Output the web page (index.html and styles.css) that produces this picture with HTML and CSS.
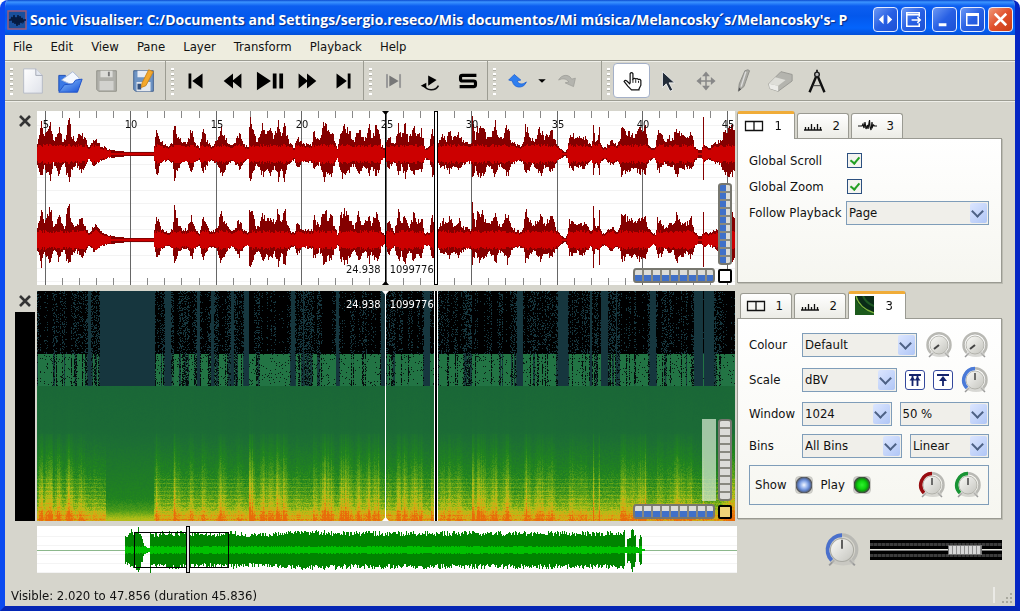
FILE: index.html
```
<!DOCTYPE html>
<html lang="en">
<head>
<meta charset="UTF-8">
<meta name="viewport" content="width=device-width, initial-scale=1.0">
<title>Sonic Visualiser</title>
<link rel="stylesheet" href="styles.css">
</head>
<body>
  <!-- Shared icon shapes -->
  <svg class="defs" aria-hidden="true">
    <defs>
      <linearGradient id="knob" x1="0" y1="0" x2="1" y2="1">
        <stop offset="0" stop-color="#fbfbf8"/>
        <stop offset="1" stop-color="#c4c4be"/>
      </linearGradient>
      <linearGradient id="folder" x1="0" y1="0" x2="1" y2="1">
        <stop offset="0" stop-color="#8fc4fb"/>
        <stop offset="1" stop-color="#1450d8"/>
      </linearGradient>
      <linearGradient id="paper" x1="0" y1="0" x2="1" y2="1">
        <stop offset="0" stop-color="#ffffff"/>
        <stop offset="1" stop-color="#dfe2ea"/>
      </linearGradient>
      <symbol id="i-cross" viewBox="0 0 14 14"><path d="M2 2l10 10M12 2L2 12" stroke="#333" stroke-width="2.600"/></symbol>
      <symbol id="i-panes" viewBox="0 0 20 14"><path d="M1.500 2.500h17v9h-17zM10 2.500v9" fill="none" stroke="#111" stroke-width="1.300"/></symbol>
      <symbol id="i-ruler" viewBox="0 0 20 14"><path d="M1 11h18M2.500 11V8M5.500 11V8M8.500 11V5M11.500 11V8M14.500 11V5M17.500 11V8" fill="none" stroke="#111" stroke-width="1.300"/></symbol>
      <symbol id="i-wave" viewBox="0 0 20 14"><path d="M1 7h4l1-2 1 4 1-6 1 7 1.500-4 .5 4 1.500-9 .5 7 1 3 1-8 .5 5 1-2 1 1h3" fill="none" stroke="#111" stroke-width="1.200"/></symbol>
      <symbol id="i-dial" viewBox="0 0 28 28">
        <path d="M4 26l4-4M24 26l-4-4" stroke="#999" stroke-width="1.500"/>
        <path d="M6 22a11.500 11.500 0 1 1 16 0" fill="none" stroke="#b9b9b4" stroke-width="2.500"/>
        <ellipse cx="15" cy="23" rx="9" ry="3" fill="#c0c0ba" opacity=".6"/>
        <circle cx="14" cy="14" r="9" fill="url(#knob)" stroke="#a9a9a2" stroke-width=".8"/>
      </symbol>
    </defs>
  </svg>

  <div class="window">
    <header class="titlebar">
      <svg class="app-icon" viewBox="0 0 20 20"><path d="M1 1h18v18H1z" fill="#1a4f9c" stroke="#9c5c78" stroke-width="1.500"/><path d="M2 10h2l1-3 1 6 1-8 1 9 1-7 1 9 1-11 1 10 1-9 1 7 1-5 1 4 1-2h2" fill="none" stroke="#061a40" stroke-width="1.500"/></svg>
      <h1>Sonic Visualiser: C:/Documents and Settings/sergio.reseco/Mis documentos/Mi música/Melancosky´s/Melancosky's- P</h1>
      <div class="window-buttons">
        <button aria-label="Switch screen"><svg viewBox="0 0 24 24"><path d="M10 7v10l-5-5zM14 7v10l5-5z" fill="#fff"/></svg></button>
        <button class="apart" aria-label="Move to screen"><svg viewBox="0 0 24 24"><path d="M18 9V5H5v14h13v-3M5 7h13M10 12.500h9M16 9.500l3 3-3 3" fill="none" stroke="#fff" stroke-width="1.600"/></svg></button>
        <button aria-label="Minimize"><svg viewBox="0 0 24 24"><path d="M6 16h8v3H6z" fill="#fff"/></svg></button>
        <button aria-label="Maximize"><svg viewBox="0 0 24 24"><path d="M6 6h12v12H6zM6 7.500h12" fill="none" stroke="#fff" stroke-width="1.600"/></svg></button>
        <button class="close" aria-label="Close"><svg viewBox="0 0 24 24"><path d="M6 6l12 12M18 6L6 18" stroke="#fff" stroke-width="2.600"/></svg></button>
      </div>
    </header>

    <nav class="menubar">
      <a href="#">File</a>
      <a href="#">Edit</a>
      <a href="#">View</a>
      <a href="#">Pane</a>
      <a href="#">Layer</a>
      <a href="#">Transform</a>
      <a href="#">Playback</a>
      <a href="#">Help</a>
    </nav>

    <div class="toolbar">
      <div class="group files">
        <button aria-label="New"><svg viewBox="0 0 30 30"><path d="M5 2h13l7 7v19H5z" fill="url(#paper)" stroke="#b4b8c4"/><path d="M18 2v7h7" fill="#e4e8f0" stroke="#a4a8b4"/></svg></button>
        <button aria-label="Open"><svg viewBox="0 0 30 30"><path d="M3 26V9h7l2 3h12v6" fill="#3a78e4" stroke="#1c4cb4"/><path d="M6 14l12-9 7 7-6 8z" fill="#f4f8ff" stroke="#a8b8d8"/><path d="M3 27l6-8 9-1 3-4 7-1-5 14z" fill="url(#folder)" stroke="#1c50c8"/></svg></button>
        <button aria-label="Save"><svg viewBox="0 0 30 30"><path d="M4 4h21v22H6l-2-2z" fill="#b0b0aa" stroke="#909088"/><path d="M8 4h13v7H8z" fill="#dcdcd8"/><path d="M16 5h2v5h-2z" fill="#777"/><path d="M7 15h15v10H7z" fill="#d2d2ce"/></svg></button>
        <button aria-label="Save As"><svg viewBox="0 0 30 30"><path d="M4 4h21v22H6l-2-2z" fill="#6e94c4" stroke="#3c5c8c"/><path d="M8 4h13v7H8z" fill="#e8ecf4"/><path d="M7 16h15v10H7z" fill="#e4e8ee"/><path d="M8 18h4v6H8z" fill="#35517c"/><path d="M20 3l5 2-8 15-5 2 1-5z" fill="#f4a82c" stroke="#c88420"/></svg></button>
      </div>
      <div class="group">
        <button aria-label="Rewind to start"><svg viewBox="0 0 30 30"><path d="M7 7h3v16H7zM22 7v16L11 15z"/></svg></button>
        <button aria-label="Rewind"><svg viewBox="0 0 30 30"><path d="M15 7v16L5 15zM24 7v16l-10-8z"/></svg></button>
        <button aria-label="Play / Pause"><svg viewBox="0 0 30 30"><path d="M1 5v20l15-10zM18 7h4v16h-4zM25 7h4v16h-4z"/></svg></button>
        <button aria-label="Fast forward"><svg viewBox="0 0 30 30"><path d="M6 7v16l10-8zM15 7v16l10-8z"/></svg></button>
        <button aria-label="Forward to end"><svg viewBox="0 0 30 30"><path d="M7 7v16l11-8zM19 7h3v16h-3z"/></svg></button>
      </div>
      <div class="group">
        <button disabled aria-label="Constrain to selection"><svg viewBox="0 0 30 30"><path d="M7 8h1v14H7zM21 8h1v14h-1z" fill="#777" stroke="#999"/><path d="M10 9v12l10-6z" fill="#777"/></svg></button>
        <button aria-label="Loop"><svg viewBox="0 0 30 30"><path d="M12 9v11l9-6z"/><path d="M7 19c3 7 13 7 16 1" fill="none" stroke="#111" stroke-width="1.600"/><path d="M4 20l6-3v6z"/></svg></button>
        <button aria-label="Solo"><svg viewBox="0 0 30 30"><path d="M24 9H9q-2 0-2 2v2q0 2 2 2h12q2 0 2 2v2q0 2-2 2H6" fill="none" stroke="#000" stroke-width="3.400"/></svg></button>
      </div>
      <div class="group history">
        <button aria-label="Undo"><svg viewBox="0 0 30 30"><path d="M5 14l6-6 7 6-4 1c2 4 6 4 10 1-3 8-14 7-15-1z" fill="#2f7ff0" stroke="#1c5ed0" stroke-width=".8"/></svg></button>
        <button class="drop" aria-label="Undo list"><svg viewBox="0 0 12 30"><path d="M2 13h8l-4 4z"/></svg></button>
        <button disabled aria-label="Redo"><svg viewBox="0 0 30 30"><path d="M6 14c3-6 11-7 14-1l4-1-2 9-9-4 4-1c-3-4-7-4-11-2z" fill="#b4b4ae" stroke="#9c9c96" stroke-width=".8"/></svg></button>
        <button class="drop" disabled aria-label="Redo list"></button>
      </div>
      <div class="group last">
        <button class="pressed" aria-label="Navigate"><svg viewBox="0 0 30 30"><path d="M13 17V7q1.500-2 3 0v6q1.500-1.500 3 0 1.500-1.200 3 .5 1.500-1 2.500 1v5l-2 4v1h-8l-4-4-4-5q1-2 3-.5l3 3z" fill="#fff" stroke="#111" stroke-width="1.300"/><path d="M16 13v4M19 14v3M22 15v2" stroke="#111"/></svg></button>
        <button aria-label="Select"><svg viewBox="0 0 30 30"><path d="M8 5v17l4-4 4 8 3-1.500-4-7.500h6z" fill="#222c38" stroke="#fff" stroke-width=".8"/></svg></button>
        <button disabled aria-label="Edit"><svg viewBox="0 0 30 30"><path d="M15 6v18M6 15h18M12.500 9L15 6l2.500 3zM12.500 21l2.500 3 2.500-3zM9 12.500L6 15l3 2.500zM21 12.500l3 2.500-3 2.500z" fill="#8c8c88" stroke="#888" stroke-width="1.600"/></svg></button>
        <button disabled aria-label="Draw"><svg viewBox="0 0 30 30"><path d="M17 4q4-2 5 0l-6 17-6 5 1-8z" fill="#aaaaa4" stroke="#8c8c88"/><path d="M18 5l-5 16" stroke="#ddd" stroke-width="1.500"/><path d="M10 26l1-4 2 2z" fill="#555"/></svg></button>
        <button disabled aria-label="Erase"><svg viewBox="0 0 30 30"><path d="M3 18L16 5l12 3v7L13 26l-9-3z" fill="#b4b4ae" stroke="#989892"/><path d="M3 18l10 2v6l-9-3z" fill="#ecece8"/><path d="M3 18l7-7 11 3-8 6z" fill="#deded8"/></svg></button>
        <button aria-label="Measure"><svg viewBox="0 0 30 30"><path d="M15 8L7 27M15 8l8 19" stroke="#111" stroke-width="2.600"/><path d="M10 20h9" stroke="#333"/><circle cx="15" cy="8" r="2.500" fill="#bbb" stroke="#222" stroke-width="1.500"/><path d="M15 3v3" stroke="#222" stroke-width="2"/></svg></button>
      </div>
    </div>

    <main class="workspace">
      <!-- Waveform pane -->
      <div class="gutter">
        <button class="pane-close" aria-label="Close pane"><svg viewBox="0 0 14 14"><use href="#i-cross"/></svg></button>
      </div>
      <section class="pane" id="wave-pane">
        <canvas id="waveform"></canvas>
        <div class="ruler" id="ruler"></div>
        <div class="readout bottom"><span>24.938</span><span>1099776</span></div>
        <div class="wheel vertical blue"></div>
        <div class="wheel horizontal"></div>
        <button class="reset" aria-label="Reset zoom"></button>
      </section>
      <section class="properties">
        <div class="tabs" role="tablist">
          <button role="tab" aria-selected="true"><svg viewBox="0 0 20 14"><use href="#i-panes"/></svg>1</button>
          <button role="tab"><svg viewBox="0 0 20 14"><use href="#i-ruler"/></svg>2</button>
          <button role="tab"><svg viewBox="0 0 20 14"><use href="#i-wave"/></svg>3</button>
        </div>
        <div class="sheet general">
          <label for="gscroll">Global Scroll</label>
          <input type="checkbox" id="gscroll" checked>
          <label for="gzoom">Global Zoom</label>
          <input type="checkbox" id="gzoom" checked>
          <label for="follow">Follow Playback</label>
          <div class="combo"><select id="follow"><option>Page</option></select></div>
        </div>
      </section>

      <!-- Spectrogram pane -->
      <div class="gutter">
        <button class="pane-close" aria-label="Close pane"><svg viewBox="0 0 14 14"><use href="#i-cross"/></svg></button>
        <div class="key"></div>
      </div>
      <section class="pane" id="spectrum-pane">
        <canvas id="spectrum"></canvas>
        <div class="readout top"><span>24.938</span><span>1099776</span></div>
        <div class="zoom-strip"></div>
        <div class="wheel vertical"></div>
        <div class="wheel horizontal"></div>
        <button class="reset yellow" aria-label="Reset zoom"></button>
      </section>
      <section class="properties">
        <div class="tabs" role="tablist">
          <button role="tab"><svg viewBox="0 0 20 14"><use href="#i-panes"/></svg>1</button>
          <button role="tab"><svg viewBox="0 0 20 14"><use href="#i-ruler"/></svg>2</button>
          <button role="tab" aria-selected="true"><svg class="thumb" viewBox="0 0 19 19"><path d="M0 0h19v19H0z" fill="#0a2c18"/><path d="M0 2q5 12 19 15v2H0z" fill="#1c5a1c"/><path d="M1 0q3 12 18 17" fill="none" stroke="#7cb43c" stroke-width="1.300"/><path d="M8 0q3 7 11 10" fill="none" stroke="#1f5a24" stroke-width="2"/></svg>3</button>
        </div>
        <div class="sheet layer">
          <div class="row tall">
            <label for="colour">Colour</label>
            <div class="combo"><select id="colour"><option>Default</option></select></div>
            <div class="dial"><svg viewBox="0 0 28 28"><use href="#i-dial"/><path d="M14 14l-5 4" stroke="#444" stroke-width="2"/></svg><input type="range" aria-label="Threshold" value="0"></div>
            <div class="dial"><svg viewBox="0 0 28 28"><use href="#i-dial"/><path d="M14 14l-5 4" stroke="#444" stroke-width="2"/></svg><input type="range" aria-label="Colour rotation" value="0"></div>
          </div>
          <div class="row tall">
            <label for="scale">Scale</label>
            <div class="combo"><select id="scale"><option>dBV</option></select></div>
            <button class="toggle" aria-label="Normalize columns"><svg viewBox="0 0 18 18"><path d="M3 4h12M6.500 15V5M11.500 15V5" fill="none" stroke="#14246c" stroke-width="1.800"/><path d="M3.500 9.500l3-4 3 4zM8.500 9.500l3-4 3 4z" fill="#14246c"/></svg></button>
            <button class="toggle" aria-label="Normalize visible area"><svg viewBox="0 0 18 18"><path d="M3 4h12M9 15V7" fill="none" stroke="#14246c" stroke-width="1.800"/><path d="M5 10l4-5 4 5z" fill="#14246c"/></svg></button>
            <div class="dial"><svg viewBox="0 0 28 28"><use href="#i-dial"/><path d="M6 22A11.500 11.500 0 0 1 14 2.500" fill="none" stroke="#4a7ad8" stroke-width="3.500"/><path d="M14 14V7" stroke="#444" stroke-width="1.500"/></svg><input type="range" aria-label="Gain"></div>
          </div>
          <div class="row">
            <label for="win">Window</label>
            <div class="combo"><select id="win"><option>1024</option></select></div>
            <div class="combo"><select aria-label="Window overlap"><option>50 %</option></select></div>
          </div>
          <div class="row">
            <label for="bins">Bins</label>
            <div class="combo bins"><select id="bins"><option>All Bins</option></select></div>
            <div class="combo"><select aria-label="Frequency scale"><option>Linear</option></select></div>
          </div>
          <div class="playbox">
            <label for="show">Show</label>
            <input type="checkbox" class="led" id="show" checked>
            <label for="play">Play</label>
            <input type="checkbox" class="led green" id="play" checked>
            <div class="dial push"><svg viewBox="0 0 28 28"><use href="#i-dial"/><path d="M6 22A11.500 11.500 0 0 1 14 2.500" fill="none" stroke="#980c10" stroke-width="3.500"/><path d="M14 14V7" stroke="#444" stroke-width="1.500"/></svg><input type="range" aria-label="Playback gain"></div>
            <div class="dial"><svg viewBox="0 0 28 28"><use href="#i-dial"/><path d="M6 22A11.500 11.500 0 0 1 14 2.500" fill="none" stroke="#189434" stroke-width="3.500"/><path d="M14 14V7" stroke="#444" stroke-width="1.500"/></svg><input type="range" aria-label="Playback pan"></div>
          </div>
        </div>
      </section>
    </main>

    <div class="lower">
      <canvas id="overview"></canvas>
      <div class="output">
        <div class="dial big"><svg viewBox="0 0 28 28"><use href="#i-dial"/><path d="M6 22A11.500 11.500 0 0 1 14 2.500" fill="none" stroke="#4a70cc" stroke-width="3"/><path d="M14 13V6" stroke="#444" stroke-width="1.300"/></svg><input type="range" aria-label="Playback speed"></div>
        <input type="range" class="fader" aria-label="Volume" min="0" max="100" value="80">
      </div>
    </div>

    <footer class="statusbar">
      <p>Visible: 2.020 to 47.856 (duration 45.836)</p>
      <svg class="sizegrip" viewBox="0 0 22 18"><path d="M1 0v16" stroke="#fff"/><path d="M17 7h2M13 11h2M17 11h2M9 15h2M13 15h2M17 15h2" stroke="#a8a89e" stroke-width="2"/></svg>
    </footer>
  </div>

  <script src="script.js"></script>
</body>
</html>
```
FILE: styles.css
```
* {
  box-sizing: border-box;
}

body {
  margin: 0;
  background: #fff;
  font-family: "DejaVu Sans Condensed", "DejaVu Sans", sans-serif;
  font-size: 13px;
  line-height: 16px;
  color: #111;
}

button {
  font: inherit;
  color: inherit;
  padding: 0;
  border: 0;
  background: none;
}

svg {
  display: block;
}

.defs {
  position: absolute;
  width: 0;
  height: 0;
}

.window {
  display: flex;
  flex-direction: column;
  min-height: 100vh;
  border: 5px solid #0a3ae0;
  border-color: #0a3ae0 #0526c4 #0526b4 #0a4af0;
  border-top: 0;
  border-radius: 8px 8px 0 0;
  background: #d6d5cc;
  overflow: hidden;
}

/* Title bar */
.titlebar {
  display: flex;
  align-items: center;
  height: 35px;
  margin: 0 -5px;
  padding: 4px 7px 0;
  background: linear-gradient(#0a4ad0 0, #3c94ff 2px, #0c5ef0 6px, #0458ec 16px, #0464fc 28px, #0450d8 35px);
}

.app-icon {
  width: 20px;
  height: 20px;
  margin-right: 3px;
}

.titlebar h1 {
  flex: 1;
  min-width: 0;
  margin: 0;
  overflow: hidden;
  white-space: nowrap;
  font: bold 14px/20px "Open Sans", sans-serif;
  color: #fff;
  text-shadow: 1px 1px 1px #0a2a80;
}

.window-buttons {
  display: flex;
  gap: 3px;
}

.window-buttons button {
  width: 25px;
  height: 25px;
  border: 1px solid #e4ecff;
  border-radius: 4px;
  background: linear-gradient(135deg, #6c98f4, #2860e4 50%, #1c50d4);
}

.window-buttons .apart {
  margin-right: 3px;
}

.window-buttons .close {
  background: linear-gradient(135deg, #f09878, #e0502c 50%, #c83c14);
}

/* Menu */
.menubar {
  display: flex;
  gap: 18px;
  height: 25px;
  padding: 4px 8px;
  background: #eeeddf;
}

.menubar a {
  color: #111;
  text-decoration: none;
}

/* Toolbar */
.toolbar {
  display: flex;
  height: 41px;
  border-top: 1px solid #9c9c92;
  border-bottom: 1px solid #9c9c92;
  box-shadow: inset 0 1px #f0f0ea, 0 1px #eeeee8;
}

.group {
  position: relative;
  display: flex;
  align-items: center;
  padding: 0 1px 0 11px;
  border-right: 1px solid #9c9c92;
}

.group.files {
  padding: 0 3px 0 9px;
}

.group.history {
  padding-right: 4px;
}

.group.last {
  border-right: 0;
}

.group::before {
  content: "";
  position: absolute;
  left: 5px;
  top: 7px;
  bottom: 5px;
  width: 3px;
  background: repeating-linear-gradient(#fff 0, #fff 2px, #b0b0a6 2px, #b0b0a6 3px, transparent 3px, transparent 5px);
}

.group button {
  width: 37px;
  height: 35px;
}

.group svg {
  width: 28px;
  height: 28px;
  margin: 0 auto;
}

.group .drop,
.group .drop svg {
  width: 12px;
}

.group .pressed {
  border: 1px solid #a4b0c8;
  border-radius: 4px;
  background: #fff;
}

/* Panes */
.workspace {
  flex: 1;
  display: grid;
  grid-template-columns: 20px minmax(0, 1fr) 265px;
  grid-template-rows: minmax(174px, 87fr) minmax(230px, 115fr);
  column-gap: 2px;
  row-gap: 6px;
  padding: 10px 13px 0 10px;
}

.gutter {
  display: flex;
  flex-direction: column;
  align-items: center;
}

.pane-close svg {
  width: 14px;
  height: 14px;
  margin: 3px 0 4px;
}

.key {
  flex: 1;
  width: 20px;
  background: #000;
}

.pane {
  position: relative;
  background: #fff;
}

.pane canvas {
  position: absolute;
  width: 100%;
  height: 100%;
}

.ruler span {
  position: absolute;
  top: 7px;
  transform: translateX(-50%);
  font-size: 11px;
  line-height: 14px;
}

.readout {
  position: absolute;
  left: 50%;
  display: flex;
  gap: 9px;
  margin-left: -40px;
  font-size: 11px;
  line-height: 14px;
}

.readout.bottom {
  bottom: 8px;
}

.readout.top {
  top: 7px;
  color: #fff;
}

.wheel {
  position: absolute;
  border: 2px solid #77776f;
  background-color: #dcdcd8;
}

.wheel.vertical {
  right: 3px;
  bottom: 20px;
  width: 14px;
  height: 82px;
  border-radius: 4px / 3px;
  background-image: repeating-linear-gradient(transparent 0, transparent 6px, #88887f 6px, #88887f 8px);
}

.wheel.vertical.blue {
  background-image: repeating-linear-gradient(transparent 0, transparent 6px, #88887f 6px, #88887f 8px), linear-gradient(90deg, #4070c8 6px, transparent 6px);
}

.wheel.horizontal {
  right: 20px;
  bottom: 2px;
  width: 82px;
  height: 15px;
  border-radius: 3px / 4px;
  background-image: repeating-linear-gradient(90deg, transparent 0, transparent 7px, #88887f 7px, #88887f 9px), linear-gradient(transparent 5px, #4070c8 5px);
}

.reset {
  position: absolute;
  right: 3px;
  bottom: 2px;
  width: 14px;
  height: 14px;
  border: 2px solid #000;
  border-radius: 2px;
  background: #fff;
}

.reset.yellow {
  background: #f0d478;
}

.zoom-strip {
  position: absolute;
  right: 19px;
  bottom: 20px;
  width: 14px;
  height: 82px;
  background: rgba(220, 236, 214, 0.7);
}

/* Property boxes */
.properties {
  display: flex;
  flex-direction: column;
  padding-bottom: 2px;
}

.tabs {
  display: flex;
  align-items: flex-end;
  gap: 2px;
  height: 27px;
  flex: none;
}

.tabs button {
  display: flex;
  align-items: center;
  justify-content: space-between;
  width: 52px;
  height: 25px;
  padding: 0 8px 0 5px;
  border: 1px solid #9a9a92;
  border-bottom: 0;
  border-radius: 3px 3px 0 0;
  background: linear-gradient(#fff, #ecece6);
}

.tabs button:first-child:not([aria-selected]) {
  margin-left: 3px;
}

.tabs button[aria-selected] {
  z-index: 1;
  width: 58px;
  height: 28px;
  margin-bottom: -1px;
  padding: 0 12px 2px 6px;
  border-top: 3px solid #f0ac38;
  background: #fff;
}

.tabs svg {
  width: 20px;
  height: 14px;
}

.tabs .thumb {
  width: 19px;
  height: 19px;
}

.sheet {
  flex: 1;
  border: 1px solid #9a9a92;
  box-shadow: 1px 1px #bcbcb2;
  background: linear-gradient(#fff, #f6f6f0);
  padding: 10px 12px 12px 11px;
}

.general {
  display: grid;
  grid-template-columns: 97px 1fr;
  grid-auto-rows: 23px;
  align-content: start;
  align-items: center;
  row-gap: 3px;
  white-space: nowrap;
}

.sheet input[type="checkbox"] {
  appearance: none;
  width: 15px;
  height: 15px;
  margin: 0 1px;
  border: 1px solid #2c5080;
  background: #f4f4f0;
}

.sheet input[type="checkbox"]:not(.led):checked::after {
  content: "";
  display: block;
  width: 4px;
  height: 7px;
  margin: 1px 0 0 4px;
  border: solid #24a024;
  border-width: 0 2px 2px 0;
  transform: rotate(40deg);
}

.combo {
  position: relative;
  flex: 1;
  min-width: 0;
}

.combo.bins {
  flex: 0 0 100px;
}

.combo select {
  display: block;
  appearance: none;
  width: 100%;
  height: 24px;
  padding: 0 20px 0 2px;
  border: 1px solid #7f9db9;
  border-radius: 0;
  background: #f0efea;
  font: inherit;
  color: inherit;
}

.combo::before {
  content: "";
  position: absolute;
  right: 2px;
  top: 2px;
  width: 17px;
  height: 20px;
  border-radius: 2px;
  background: linear-gradient(135deg, #dce6ff, #b0c6f6);
  pointer-events: none;
}

.combo::after {
  content: "";
  position: absolute;
  right: 7px;
  top: 6px;
  width: 7px;
  height: 7px;
  border: solid #4d6185;
  border-width: 0 2px 2px 0;
  transform: rotate(45deg);
  pointer-events: none;
}

.layer {
  display: flex;
  flex-direction: column;
  gap: 3px;
}

.row {
  display: flex;
  align-items: center;
  gap: 8px;
  height: 29px;
}

.row.tall {
  height: 32px;
}

.row label {
  width: 45px;
}

.toggle {
  width: 20px;
  height: 20px;
  border: 1px solid #34489c;
  border-radius: 3px;
  background: #fff;
}

.dial {
  position: relative;
  flex: none;
  width: 28px;
  height: 28px;
}

.dial svg {
  width: 100%;
  height: 100%;
}

.dial input {
  position: absolute;
  inset: 0;
  width: 100%;
  margin: 0;
  opacity: 0;
}

.dial.big {
  width: 36px;
  height: 36px;
}

.dial.push {
  margin-left: auto;
}

.playbox {
  display: flex;
  align-items: center;
  gap: 8px;
  height: 40px;
  margin-top: 2px;
  padding: 0 6px 0 5px;
  border: 1px solid #7f9db9;
}

.sheet .playbox .led {
  width: 18px;
  height: 18px;
  margin: 0;
  border: 1px solid #c8c8c2;
  border-radius: 4px;
  background: radial-gradient(circle, #f4f8ff 0, #88a8e8 4px, #5c7cc0 6px, #555 8px, #d0d0cc 9px);
}

.sheet .playbox .led.green {
  background: radial-gradient(circle, #30f030 0, #10d410 4px, #0ca00c 6px, #444 8px, #d0d0cc 9px);
}

/* Overview and output level */
.lower {
  display: flex;
  margin-top: 5px;
  padding: 0 13px 0 32px;
}

#overview {
  flex: 1;
  min-width: 0;
  height: 47px;
  background: #fff;
}

.output {
  flex: 0 0 265px;
  display: flex;
  align-items: center;
  justify-content: flex-end;
  gap: 10px;
}

.fader {
  appearance: none;
  width: 132px;
  height: 20px;
  margin: 0;
  background:
    linear-gradient(#000 3px, transparent 3px, transparent 6px, #000 6px, #000 9px, #e8e8e0 9px, #e8e8e0 10px, #777 10px, #777 11px, #000 11px, #000 14px, transparent 14px, transparent 17px, #000 17px),
    repeating-linear-gradient(90deg, #3c3c3c 0, #3c3c3c 3px, #222 3px, #222 4px);
}

.fader::-webkit-slider-thumb {
  appearance: none;
  width: 34px;
  height: 10px;
  border: 1px solid #777;
  background: repeating-linear-gradient(90deg, #d8d8d8 0, #d8d8d8 3px, #909090 3px, #909090 4px);
}

/* Status bar */
.statusbar {
  display: flex;
  align-items: flex-end;
  justify-content: space-between;
  height: 33px;
  padding: 0 0 1px 6px;
}

.statusbar p {
  margin: 0 0 1px;
}

.sizegrip {
  width: 22px;
  height: 18px;
}
```
FILE: script.js
```
// Peak envelope of the visible audio: x position, peak height (thirds of a pixel)
const peaks = [
  0,40, 12,100, 20,50, 40,110, 48,40, 65,85, 75,45, 82,45, 94,118, 102,70, 115,40, 130,75, 140,55, 155,20,
  170,50, 190,28, 210,18, 230,12, 255,9, 280,6, 348,6, 352,45, 357,90, 370,40, 390,25, 405,35, 410,102,
  420,60, 435,35, 450,35, 461,83, 470,40, 485,20, 496,75, 510,40, 525,25, 540,45, 550,92, 570,40, 585,25,
  605,65, 620,30, 632,20, 634,108, 642,108, 655,45, 665,50, 675,92, 685,60, 698,80, 710,55, 722,105,
  732,60, 740,105, 750,50, 760,30, 770,22, 778,60, 795,30, 825,35, 828,85, 835,60, 845,40, 860,105,
  870,75, 880,85, 890,45, 900,15, 908,80, 918,95, 930,85, 940,60, 950,40, 962,85, 975,50, 985,60, 995,90,
  1000,55, 1014,85, 1022,80, 1030,30, 1042,15, 1050,60, 1060,45, 1070,30, 1082,95, 1090,50, 1102,95,
  1112,45, 1128,85, 1140,60, 1152,75, 1160,20, 1175,25, 1183,90, 1193,45, 1200,30, 1205,50, 1215,65,
  1225,50, 1235,75, 1245,50, 1262,68, 1275,45, 1290,35, 1300,35, 1303,110, 1312,50, 1318,85, 1335,85,
  1350,50, 1360,60, 1373,100, 1380,50, 1392,50, 1408,90, 1420,45, 1440,28, 1455,30, 1463,95, 1475,60,
  1485,40, 1507,85, 1520,50, 1535,70, 1542,75, 1555,35, 1565,20, 1580,5, 1588,20, 1593,60, 1607,65,
  1612,45, 1630,60, 1645,50, 1655,30, 1662,30, 1666,108, 1670,40, 1680,40, 1683,108, 1687,30, 1700,20,
  1720,45, 1735,30, 1745,40, 1750,90, 1765,70, 1780,65, 1792,60, 1805,80, 1815,65, 1820,102, 1828,40,
  1845,18, 1852,22, 1858,72, 1870,60, 1880,35, 1893,55, 1905,50, 1915,90, 1925,65, 1935,60, 1945,55,
  1960,70, 1968,30, 1980,12, 1992,15, 1995,115, 1998,30, 2010,20, 2025,30, 2035,40, 2045,40, 2060,80,
  2080,90, 2092,70
];
// Peak envelope of the whole file for the overview strip
const overviewPeaks = [
  0,0, 261,0, 262,38, 274,40, 278,60, 290,50, 302,62, 310,50, 320,12, 334,6, 338,6, 339,62, 345,42,
  380,50, 420,50, 520,46, 600,50, 620,44, 700,46, 800,52, 1000,50, 1300,50, 1590,50, 1690,48, 1762,52,
  1764,8, 1768,10, 1770,34, 1778,36, 1784,62, 1794,40, 1796,8, 1804,8, 1807,46, 1813,40, 1815,4, 1826,0, 2100,0
];

let seed = 7;
function rnd() {
  seed = (seed * 16807) % 2147483647;
  return seed / 2147483647;
}

function sample(list, x) {
  for (let i = 2; i < list.length; i += 2) {
    if (x <= list[i]) {
      const t = (x - list[i - 2]) / (list[i] - list[i - 2]);
      return list[i - 1] + (list[i + 1] - list[i - 1]) * t;
    }
  }
  return list[list.length - 1];
}

function setup(id) {
  const canvas = document.getElementById(id);
  canvas.width = canvas.clientWidth;
  canvas.height = canvas.clientHeight;
  return canvas;
}

function drawPlayhead(ctx, w, h, line) {
  const centre = Math.floor(w / 2) - 1;
  ctx.fillStyle = line;
  ctx.fillRect(centre, 0, 1, h);
  ctx.beginPath();
  ctx.moveTo(centre - 3, 0); ctx.lineTo(centre + 4, 0); ctx.lineTo(centre + 0.5, 4);
  ctx.moveTo(centre - 3, h); ctx.lineTo(centre + 4, h); ctx.lineTo(centre + 0.5, h - 4);
  ctx.fill();
  const x = Math.round(w * 396 / 697);
  ctx.fillStyle = '#000';
  ctx.fillRect(x, 0, 4, h);
  ctx.fillStyle = '#fff';
  if (line === '#000') {
    ctx.fillRect(x + 1, 1, 2, h - 2);
  } else {
    ctx.fillRect(x, 0, 1, h);
    ctx.fillRect(x + 3, 0, 1, h);
  }
}

function drawWaveform() {
  const canvas = setup('waveform');
  const ctx = canvas.getContext('2d');
  const w = canvas.width, h = canvas.height;
  const ruler = document.getElementById('ruler');
  const second = w * 17.03 / 697;
  ruler.innerHTML = '';
  ctx.fillStyle = '#f3f3f3';
  for (let y = 14; y < h; y += 13) ctx.fillRect(0, y, w, 1);
  for (let s = 5; s < 46; s++) {
    const x = Math.round(w * 8 / 697 + (s - 5) * second);
    const major = s % 5 === 0;
    ctx.fillStyle = major ? '#666' : '#888';
    if (major) {
      ctx.fillRect(x, 0, 1, h);
      const label = document.createElement('span');
      label.textContent = s;
      label.style.left = (x + 1) + 'px';
      ruler.appendChild(label);
    } else {
      ctx.fillRect(x, 0, 1, 7);
      ctx.fillRect(x, h - 7, 1, 7);
    }
  }
  for (const mid of [Math.round(h * 0.247), Math.round(h * 0.743)]) {
    for (let x = 0; x < w; x++) {
      const p = sample(peaks, x * 2091 / w) / 3;
      const loud = p > 5;
      const up = Math.round(Math.max(1, p * (loud ? 0.72 + rnd() * 0.34 : 0.9)));
      const down = Math.round(Math.max(1, Math.min(28, p * (loud ? 0.58 + rnd() * 0.26 : 0.9))));
      ctx.fillStyle = '#840000';
      ctx.fillRect(x, mid - up, 1, up + down);
      const core = Math.round(Math.min(up * 0.7, loud ? 7 + rnd() * 3 : 1));
      ctx.fillStyle = '#cc0000';
      ctx.fillRect(x, mid - core, 1, core * 2);
    }
  }
  drawPlayhead(ctx, w, h, '#000');
}

const ramp = [[24, 96, 58], [28, 110, 52], [32, 132, 30], [96, 164, 24], [176, 190, 24], [218, 168, 20], [232, 108, 10]];
function colour(v) {
  v = Math.max(0, Math.min(0.999, v)) * (ramp.length - 1);
  const i = Math.floor(v), t = v - i;
  return ramp[i].map((c, k) => c + (ramp[i + 1][k] - c) * t);
}

function drawSpectrum() {
  const canvas = setup('spectrum');
  const ctx = canvas.getContext('2d');
  const w = canvas.width, h = canvas.height;
  const image = ctx.createImageData(w, h);
  const base = [0.4,0.08, 0.6,0.12, 0.7,0.22, 0.8,0.33, 0.88,0.43, 0.94,0.56, 0.97,0.76, 1,0.84];
  const calm = [0.4,0.08, 0.6,0.12, 0.7,0.2, 0.8,0.26, 0.9,0.32, 0.95,0.44, 0.98,0.62, 1,0.72];
  for (let x = 0; x < w; x++) {
    const px = x * 2091 / w;
    const e = sample(peaks, px) / 110;
    const quiet = px > 205 && px < 348;
    const loud = e * (0.6 + rnd() * 0.7);
    const streak = quiet ? 0 : Math.max(0, e - 0.35) * (0.5 + rnd() * 0.7);
    for (let y = 0; y < h; y++) {
      const t = y / h;
      const n = rnd();
      let c;
      if (t < 0.273) {
        const dark = !quiet && e > 0.28 && n > 0.7 - loud;
        c = dark ? [0, 0, 0] : [22, 54, 62];
      } else if (t < 0.409) {
        if (quiet || e < 0.28) c = [22, 54, 62];
        else if (loud > 0.42) c = n < 0.05 ? [8, 28, 20] : [34, 116, 68];
        else if (loud > 0.32) c = n < 0.6 ? [4, 12, 12] : [34, 100, 66];
        else c = n < 0.3 ? [4, 12, 12] : [24, 62, 62];
      } else {
        let v = sample(quiet ? calm : base, t);
        const depth = Math.max(0, (t - 0.62) / 0.38);
        v += streak * (depth > 0 ? 0.14 + depth * 0.5 : 0.14 * (t - 0.3));
        v += (n - 0.5) * (0.03 + depth * (quiet ? 0.04 : 0.16));
        if (t > 0.8 && y % 4 === 0 && !quiet) v += 0.08;
        c = colour(v);
      }
      const o = (y * w + x) * 4;
      image.data[o] = c[0];
      image.data[o + 1] = c[1];
      image.data[o + 2] = c[2];
      image.data[o + 3] = 255;
    }
  }
  ctx.putImageData(image, 0, 0);
  drawPlayhead(ctx, w, h, '#fff');
}

function drawOverview() {
  const canvas = setup('overview');
  const ctx = canvas.getContext('2d');
  const w = canvas.width, h = canvas.height;
  const mid = Math.round(h / 2);
  ctx.fillStyle = '#f4f4f4';
  for (let y = 10; y < h; y += 9) ctx.fillRect(0, y, w, 1);
  ctx.fillStyle = '#8cb88c';
  ctx.fillRect(0, mid, w, 1);
  for (let x = 0; x < w; x++) {
    const p = sample(overviewPeaks, x * 2100 / w) / 3;
    if (p < 0.5) continue;
    const up = Math.round(p * (0.84 + rnd() * 0.32));
    const down = Math.round(p * (0.84 + rnd() * 0.32));
    ctx.fillStyle = '#008400';
    ctx.fillRect(x, mid - up, 1, up + down);
    const core = Math.round(Math.min(up, 2.5 + rnd() * 2));
    ctx.fillStyle = '#00c000';
    ctx.fillRect(x, mid - core, 1, core * 2);
  }
  // Visible range and play position
  ctx.strokeStyle = '#000';
  ctx.lineWidth = 1;
  ctx.strokeRect(Math.round(w * 97 / 700) + 0.5, 6.5, Math.round(w * 94 / 700), h - 12);
  const x = Math.round(w * 149 / 700);
  ctx.fillStyle = '#ddd';
  ctx.fillRect(x, 0, 4, h);
  ctx.strokeRect(x + 0.5, 0.5, 3, h - 1);
}

function drawAll() {
  seed = 7;
  drawWaveform();
  drawSpectrum();
  drawOverview();
}

drawAll();
window.addEventListener('resize', drawAll);
```
